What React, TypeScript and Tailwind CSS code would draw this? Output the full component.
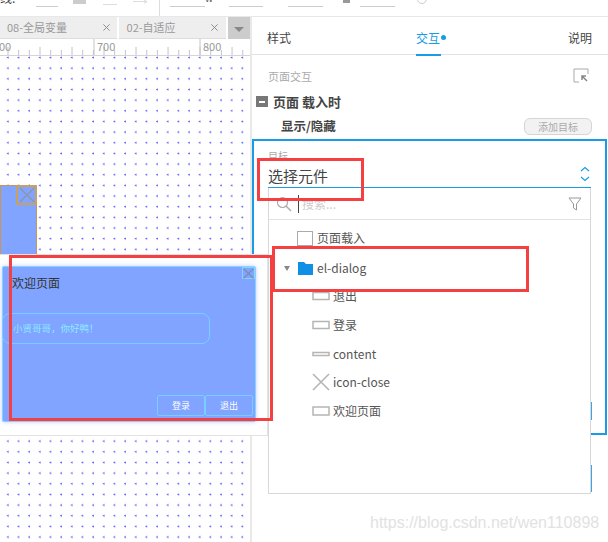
import React from "react";

const font = { fontFamily: '"Noto Sans CJK SC","Noto Sans",sans-serif' };

function RectIcon({ h = 9 }: { h?: number }) {
  return (
    <svg width="18" height="18" viewBox="0 0 18 18" className="shrink-0">
      <rect x="1" y={9 - h / 2} width="16" height={h} fill="#fff" stroke="#b5b5b5" strokeWidth="1.5" />
    </svg>
  );
}

function Cross({ size, color, width = 1.6 }: { size: number; color: string; width?: number }) {
  return (
    <svg width={size} height={size} viewBox="0 0 18 18" className="shrink-0">
      <path d="M1 1L17 17M17 1L1 17" stroke={color} strokeWidth={width} fill="none" />
    </svg>
  );
}

function TreeRow({ icon, label, mt }: { icon: React.ReactNode; label: string; mt: string }) {
  return (
    <div className={`flex h-[20px] items-center gap-[3px] pl-[43px] text-[12px] text-[#555] ${mt}`}>
      {icon}
      <span>{label}</span>
    </div>
  );
}

function Ruler() {
  const ticks = [];
  for (let i = 0; i < 24; i++) {
    const x = 8 + i * 10.67;
    const major = i % 3 === 0 ? 8 : 5;
    ticks.push(<line key={i} x1={x} x2={x} y1={16 - major} y2={16} stroke="#c4c4c4" />);
  }
  return (
    <svg width="250" height="17" className="absolute left-0 top-0">
      {ticks}
      <line x1="94" x2="94" y1="0" y2="16" stroke="#c4c4c4" />
      <line x1="200" x2="200" y1="0" y2="16" stroke="#c4c4c4" />
    </svg>
  );
}

export default function App() {
  return (
    <div className="relative h-[542px] w-[608px] overflow-hidden bg-white" style={font}>
      {/* toolbar */}
      <div className="flex h-[17px] items-start overflow-hidden border-b border-[#e8e8e8] bg-white">
        <span className="mt-[-9px] w-[36px] text-[12px] leading-[14px] text-[#444]">线:</span>
        <div className="mt-[6px] h-px w-[22px] bg-[#ccc]" />
        <div className="ml-[15px] h-[4px] w-[13px] bg-[#ccc]" />
        <div className="ml-[17px] mt-[4px] h-px w-[14px] bg-[#ddd]" />
        <svg width="16" height="8" className="ml-[16px]">
          <path d="M0 1.5H14M11 0L14 1.5L11 3.5" stroke="#ddd" fill="none" />
        </svg>
        <div className="ml-[10px] h-full w-px bg-[#ddd]" />
        <div className="ml-[10px] mt-[6px] h-px w-[35px] bg-[#ccc]" />
        <span className="mt-[-9px] w-[24px] text-[10px] leading-[14px] text-[#555]">w</span>
        <div className="mt-[6px] h-px w-[34px] bg-[#ccc]" />
        <div className="ml-[25px] mt-[6px] h-px w-[35px] bg-[#ccc]" />
        <div className="ml-[20px] h-[3px] w-[7px] bg-[#999]" />
        <div className="ml-[10px] mt-[6px] h-px w-[35px] bg-[#ccc]" />
        <div className="ml-[22px] mt-[-6px] h-[10px] w-[10px] rounded-full border border-[#ccc]" />
      </div>

      <div className="flex h-[525px]">
        {/* canvas column */}
        <div className="relative w-[250px] shrink-0">
          <div className="flex h-[22px] gap-[2px] bg-white text-[11px] text-[#999]">
            <div className="flex w-[117px] items-center justify-between border-b border-[#ddd] bg-[#eeeeee] pl-[7px] pr-[7px]">
              <span>08-全局变量</span>
              <Cross size={7} color="#888" width={2.4} />
            </div>
            <div className="flex w-[108px] items-center justify-between border-b border-[#ddd] bg-[#eeeeee] pl-[8px] pr-[8px]">
              <span>02-自适应</span>
              <Cross size={7} color="#888" width={2.4} />
            </div>
            <div className="flex w-[22px] items-center justify-center bg-[#cccccc]">
              <div className="mt-[3px] h-0 w-0 border-x-[5px] border-t-[5px] border-x-transparent border-t-[#888]" />
            </div>
          </div>
          <div className="relative h-[17px] border-b border-[#d5d5d5] text-[11px] leading-[14px] text-[#999]">
            <Ruler />
            <span className="absolute left-[-1px] top-0">00</span>
            <span className="absolute left-[97px] top-0">700</span>
            <span className="absolute left-[203px] top-0">800</span>
          </div>
          <div className="relative h-[486px] bg-white bg-[radial-gradient(circle_at_8px_1.5px,#5f5fff_0.7px,transparent_1.2px)] bg-size-[10.67px_10.67px]">
            {/* element on the canvas */}
            <div className="absolute left-0 top-[129px] h-[70px] w-[37px] border border-[#c9974f] bg-[#80a4ff]">
              <div className="absolute right-[-1px] top-[-1px] flex h-[20px] w-[21px] items-center justify-center border-2 border-[#c8a060]">
                <Cross size={16} color="#8c94ae" />
              </div>
            </div>
          </div>
        </div>

        {/* right panel */}
        <div className="relative flex-1 border-l-2 border-[#e9e9e9]">
          <div className="flex h-[38px] items-center justify-between border-b border-[#e2e2e2] pl-[15px] pr-[16px] pt-[4px] text-[12px] text-[#444]">
            <span>样式</span>
            <span className="relative ml-[3px] flex items-center text-[#1a9be8]">
              交互
              <span className="ml-[1px] h-[5px] w-[5px] rounded-full bg-[#1a9be8]" />
              <span className="absolute bottom-[-9px] left-0 h-[2px] w-[25px] bg-[#1a9be8]" />
            </span>
            <span>说明</span>
          </div>
          <div className="flex h-[29px] items-end justify-between pl-[16px] pr-[19px] text-[11px] text-[#aaa]">
            <span className="leading-[16px]">页面交互</span>
            <svg width="16" height="15" viewBox="0 0 16 15" className="mb-[1px]">
              <path d="M8 1H1V14H6M8 1H15V6" stroke="#aaa" fill="none" />
              <path d="M14 13L9 8M9 12V8H13" stroke="#888" strokeWidth="1.5" fill="none" />
            </svg>
          </div>
          <div className="mt-[8px] flex h-[19px] items-center gap-[5px] pl-[4px] text-[13px] font-bold text-[#444]">
            <span className="flex h-[11px] w-[12px] items-center justify-center bg-[#777]">
              <span className="h-[2px] w-[6px] bg-white" />
            </span>
            页面 载入时
          </div>
          <div className="mt-[6px] flex h-[19px] items-center justify-between pl-[29px] pr-[16px] text-[12.5px] font-bold text-[#444]">
            <span>显示/隐藏</span>
            <span className="flex h-[17px] w-[68px] items-center justify-center rounded-[6px] border border-[#d5d5d5] bg-[#f2f2f2] text-[10px] font-normal text-[#aaa]">
              添加目标
            </span>
          </div>
          <div className="mt-[3px] h-[296px] w-[355px] border-2 border-[#1a9be8] pl-[14px] pr-[14px]">
            <p className="pt-[8px] text-[10px] leading-[13px] text-[#aaa]">目标</p>
            <div className="flex h-[26px] items-center justify-between border-b border-[#1a9be8] pr-[1px] pt-[4px] text-[15px] text-[#444]">
              <span>选择元件</span>
              <svg width="10" height="16" viewBox="0 0 10 16" className="mt-[-6px]">
                <path d="M1 5L5 1.5L9 5M1 11L5 14.5L9 11" stroke="#1a9be8" strokeWidth="1.2" fill="none" />
              </svg>
            </div>
          </div>
          {/* buttons behind the dropdown */}
          <div className="absolute left-[338px] top-[385px] h-[18px] w-[2px] bg-[#3fa5e6]" />
          <div className="absolute left-[338px] top-[448px] h-[27px] w-[2px] bg-[#3fa5e6]" />
          {/* dropdown */}
          <div className="absolute left-[16px] top-[171px] h-[306px] w-[323px] border border-t-0 border-[#d8d8d8] bg-white">
            <div className="flex h-[32px] items-center border-b border-[#e2e2e2] pl-[7px] pr-[8px]">
              <svg width="16" height="16" viewBox="0 0 16 16" className="shrink-0">
                <circle cx="6.5" cy="6.5" r="5" stroke="#aaa" strokeWidth="1.2" fill="none" />
                <path d="M10 10L15 15" stroke="#aaa" strokeWidth="1.4" />
              </svg>
              <span className="ml-[6px] h-[18px] w-px bg-[#444]" />
              <span className="ml-[3px] text-[12px] text-[#ccc]">搜索...</span>
              <svg width="14" height="14" viewBox="0 0 14 14" className="ml-auto shrink-0">
                <path d="M1 1H13L8.5 7V13L5.5 11V7Z" stroke="#999" fill="none" />
              </svg>
            </div>
            <div className="mt-[9px] flex h-[18px] items-center gap-[4px] pl-[28px] text-[12px] text-[#555]">
              <span className="h-[15px] w-[16px] border border-[#aaa]" />
              页面载入
            </div>
            <div className="mt-[11px] flex h-[20px] items-center pl-[15px] text-[12px] text-[#555]">
              <span className="h-0 w-0 border-x-[3.5px] border-t-[5px] border-x-transparent border-t-[#888]" />
              <svg width="15" height="13" viewBox="0 0 15 13" className="ml-[8px] shrink-0">
                <path d="M0 0H6L8 2H15V13H0Z" fill="#0f8fe6" />
              </svg>
              <span className="ml-[4px]">el-dialog</span>
            </div>
            <TreeRow mt="mt-[8px]" icon={<RectIcon h={7} />} label="退出" />
            <TreeRow mt="mt-[9px]" icon={<RectIcon h={7} />} label="登录" />
            <TreeRow mt="mt-[9px]" icon={<RectIcon h={3} />} label="content" />
            <TreeRow mt="mt-[8px]" icon={<Cross size={18} color="#b5b5b5" />} label="icon-close" />
            <TreeRow mt="mt-[9px]" icon={<RectIcon h={8} />} label="欢迎页面" />
          </div>
        </div>
      </div>

      {/* pasted dialog area, lying over the canvas and the panel edge */}
      <div className="absolute left-0 top-[254px] h-[182px] w-[268px] border-b border-r border-t border-[#e2e2e2] bg-white">
        <div className="absolute left-[2px] top-[11px] h-[156px] w-[254px] rounded-[2px] border border-[#85d4ff] bg-[#80a4ff] text-[#8ee8ff] shadow-[0_0_4px_rgba(128,164,255,0.5)]">
          <div className="absolute right-0 top-0 flex h-[12px] w-[13px] items-center justify-center border border-[#85d4ff]">
            <Cross size={11} color="#7d89a8" width={2} />
          </div>
          <p className="absolute left-[9px] top-[7px] text-[12px] leading-[18px] text-[#333]">欢迎页面</p>
          <div className="absolute left-[-1px] top-[46px] flex h-[31px] w-[208px] items-center rounded-[8px] border-[1.5px] border-[#78cfff] pl-[10px] text-[9.5px]">
            小贤哥哥，你好鸭！
          </div>
          <div className="absolute left-[154px] top-[128px] flex h-[21px] text-[9px] text-white">
            <div className="flex w-[48px] items-center justify-center rounded-[2px] border-[1.5px] border-[#78cfff]">登录</div>
            <div className="flex w-[48px] items-center justify-center rounded-[2px] border-[1.5px] border-[#78cfff]">退出</div>
          </div>
        </div>
      </div>

      {/* red annotations */}
      <div className="absolute left-[257px] top-[158px] h-[43px] w-[107px] border-[3px] border-[#f44040]" />
      <div className="absolute left-[272px] top-[246px] h-[46px] w-[257px] border-[3px] border-[#f44040]" />
      <div className="absolute left-[9px] top-[255px] h-[166px] w-[264px] border-[3px] border-[#f44040]" />

      {/* watermark */}
      <span
        className="absolute left-[370px] top-[513px] text-[16px] leading-[20px] text-[#e2e2e2]"
        style={{ fontFamily: '"Liberation Sans",sans-serif' }}
      >
        https://blog.csdn.net/wen110898
      </span>
    </div>
  );
}
